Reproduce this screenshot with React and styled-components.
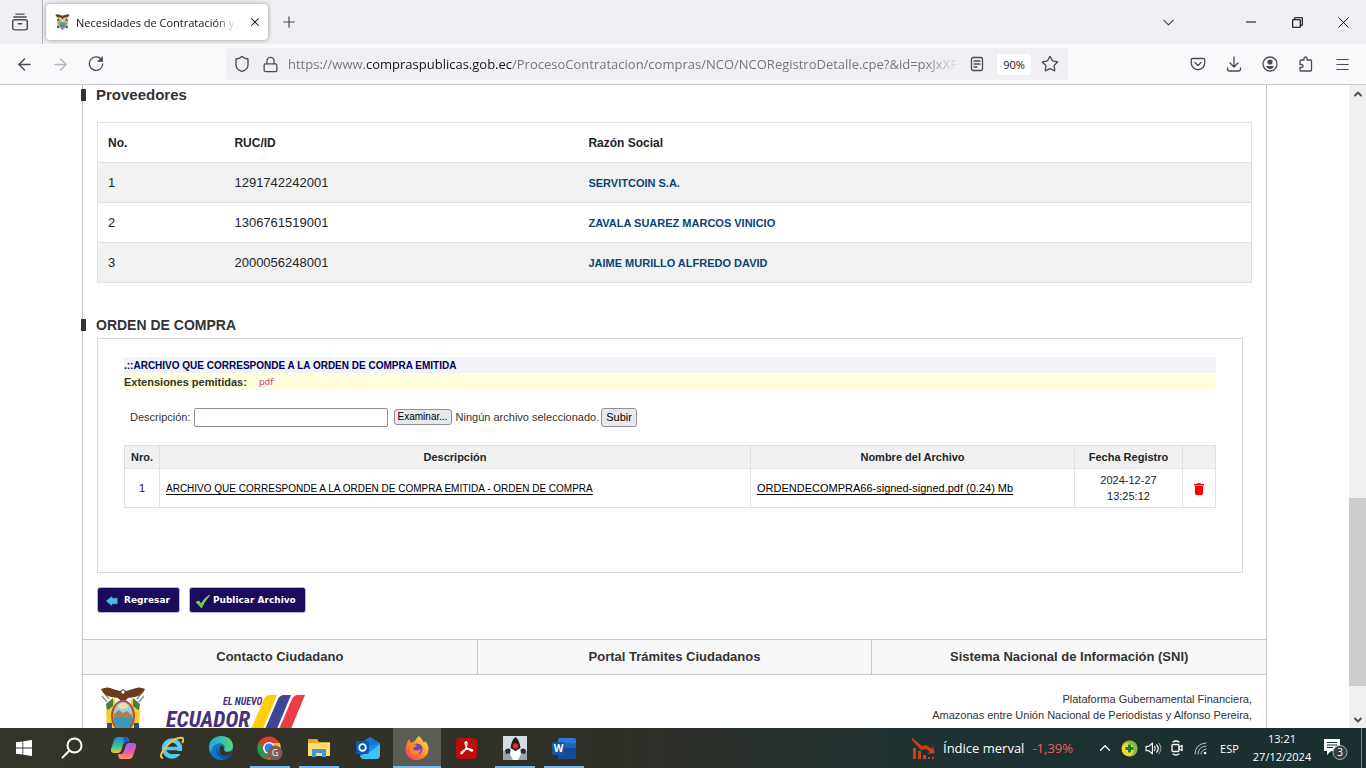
import React, { useRef, useState } from "react";
import styled, { createGlobalStyle, css } from "styled-components";
import {
  ArrowLeft,
  ArrowRight,
  ChevronDown,
  ChevronUp,
  Lock,
  Menu,
  Plus,
  Shield,
  Star,
  X,
} from "lucide-react";

const GlobalStyle = createGlobalStyle`
  * {
    box-sizing: border-box;
  }
  body {
    margin: 0;
    font-family: "Liberation Sans", Arial, sans-serif;
    color: #212529;
    background: #fff;
  }
  button, input {
    font-family: inherit;
  }
`;

const Screen = styled.div`
  height: 100vh;
  display: flex;
  flex-direction: column;
  overflow: hidden;
`;

/* ---------- browser ---------- */

const IconButton = styled.button`
  width: ${(p) => p.$width || 36}px;
  height: 32px;
  padding: 0;
  border: none;
  background: none;
  color: ${(p) => p.$color || "#4a4a52"};
  display: flex;
  flex-shrink: 0;
  align-items: center;
  justify-content: center;
`;

const TabStrip = styled.div`
  height: 44px;
  flex-shrink: 0;
  display: flex;
  align-items: center;
  background: #f0f0f4;
  font-family: "Open Sans", "Noto Sans", sans-serif;
`;

const ViewCell = styled.div`
  width: 43px;
  height: 100%;
  display: flex;
  align-items: center;
  border-right: 1px solid #b5b5bb;
`;

const Tab = styled.div`
  width: 222px;
  height: 36px;
  margin: 0 3px;
  padding-left: 9px;
  display: flex;
  align-items: center;
  gap: 6px;
  background: #fff;
  border-radius: 4px;
  box-shadow: 0 0 4px rgba(0, 0, 0, 0.4);
`;

const TabTitle = styled.span`
  flex: 1;
  overflow: hidden;
  white-space: nowrap;
  font-size: 11px;
  color: #15141a;
  mask-image: linear-gradient(to left, transparent, #000 20px);
`;

const WindowButtons = styled.div`
  margin-left: auto;
  display: flex;
`;

const NavBar = styled.div`
  height: 41px;
  flex-shrink: 0;
  padding: 0 6px;
  display: flex;
  align-items: center;
  background: #f9f9fb;
  border-bottom: 1px solid #c8c8ce;
  font-family: "Open Sans", "Noto Sans", sans-serif;
`;

const Spacer = styled.div`
  flex: 0 1 112px;
`;

const UrlBar = styled.div`
  flex: 1;
  min-width: 0;
  height: 32px;
  padding: 0 2px;
  display: flex;
  align-items: center;
  background: #f0f0f4;
  border-radius: 4px;
`;

const UrlText = styled.div`
  flex: 1;
  overflow: hidden;
  margin-left: 4px;
  white-space: nowrap;
  font-size: 13px;
  color: #77777e;
  mask-image: linear-gradient(to left, transparent, #000 36px);

  b {
    font-weight: 400;
    color: #15141a;
  }
`;

const ZoomButton = styled.button`
  width: 34px;
  height: 21px;
  margin: 0 3px 0 4px;
  padding: 0;
  border: none;
  border-radius: 3px;
  background: #fff;
  color: #15141a;
  font-size: 11px;
`;

/* ---------- page ---------- */

const Viewport = styled.div`
  flex: 1;
  min-height: 0;
  display: flex;
  overflow: hidden;
`;

const Page = styled.main`
  flex: 1;
  min-width: 0;
  padding: 0 82px;
  overflow: hidden;
`;

const Sheet = styled.div`
  border: solid #c4c4c8;
  border-width: 0 1px;
`;

const Content = styled.div`
  padding: 0 14px 26px;
`;

const Heading = styled.h2`
  margin: ${(p) => p.$top || 0}px 0 0 -16px;
  display: flex;
  align-items: center;
  gap: 10px;
  font-size: ${(p) => p.$size}px;
  line-height: 20px;
  color: #333;

  &::before {
    content: "";
    width: 5px;
    height: 12px;
    background: #333;
  }
`;

const ProviderTable = styled.table`
  width: 100%;
  margin-top: 17px;
  table-layout: fixed;
  border-collapse: collapse;
  border: 1px solid #dee2e6;
  text-align: left;
  font-size: 12px;

  tr {
    height: 40px;
    border-top: 1px solid #dee2e6;
  }
  tbody tr:nth-child(odd) {
    background: #f2f2f2;
  }
  th,
  td {
    padding: 0 10px;
  }
  td {
    font-size: 13px;
  }
  th:nth-child(1) {
    width: 11%;
  }
  th:nth-child(2) {
    width: 354px;
  }
`;

const ProviderLink = styled.a`
  font-size: 11px;
  font-weight: bold;
  color: #0d4278;
  text-decoration: none;
`;

const Panel = styled.section`
  margin: 3px 9px 0 0;
  padding: 18px 26px 64px;
  border: 1px solid #d8d8dc;
`;

const Strip = styled.div`
  height: 16px;
  margin-bottom: 1px;
  display: flex;
  align-items: center;
  gap: 12px;
  font-weight: bold;
  font-size: ${(p) => (p.$notice ? 11 : 10)}px;
  color: ${(p) => (p.$notice ? "#333" : "#00005c")};
  background: ${(p) => (p.$notice ? "#ffffdd" : "#f1f3f6")};
`;

const Extension = styled.code`
  font-family: "DejaVu Sans", sans-serif;
  font-size: 9px;
  font-weight: 400;
  color: #d63384;
`;

const UploadForm = styled.form`
  height: 20px;
  margin: 17px 0 18px;
  padding-left: 6px;
  display: flex;
  align-items: center;
  font-size: 11px;
  color: #333;
`;

const DescriptionInput = styled.input`
  width: 194px;
  height: 19px;
  margin: 0 6px 0 3px;
  padding: 0 4px;
  border: 1px solid #8f8f9d;
  border-radius: 2px;
  font-size: 11px;
`;

const FormButton = styled.button`
  height: ${(p) => (p.$small ? 16 : 19)}px;
  padding: 0 ${(p) => (p.$small ? 3 : 4)}px;
  border: 1px solid #8f8f9d;
  border-radius: 3px;
  background: #e9e9ed;
  color: #000;
  font-size: ${(p) => (p.$small ? 10 : 11)}px;
  line-height: 14px;
`;

const FileName = styled.span`
  margin: 0 2px 0 4px;
`;

const FileTable = styled.table`
  width: 100%;
  table-layout: fixed;
  border-collapse: collapse;
  font-size: 11px;
  line-height: 16px;
  text-align: center;

  th,
  td {
    padding: 0 6px;
    border: 1px solid #dee2e6;
  }
  th {
    height: 23px;
    padding: 0;
    background: #f1f1f1;
  }
  td {
    height: 39px;
  }
  td:nth-child(2),
  td:nth-child(3) {
    text-align: left;
  }
`;

const FileLink = styled.a`
  color: #000;
  font-size: ${(p) => (p.$small ? 10 : 11)}px;
  text-underline-offset: 2px;
`;

const TrashButton = styled.button`
  padding: 0;
  border: none;
  background: none;
  vertical-align: middle;

  svg {
    display: block;
  }
`;

const Actions = styled.div`
  margin-top: 14px;
  display: flex;
  gap: 9px;
`;

const ActionButton = styled.button`
  height: 26px;
  padding: 0 9px 0 ${(p) => p.$left}px;
  display: flex;
  align-items: center;
  gap: ${(p) => p.$gap}px;
  border: 1px solid #b9b3d8;
  border-radius: 3px;
  background: #1c0b5c;
  color: #fff;
  font: bold 9px "DejaVu Sans", Verdana, sans-serif;
`;

const FooterNav = styled.nav`
  display: flex;
  border: solid #c8c8cc;
  border-width: 1px 0;
  background: #f8f8f8;
`;

const FooterLink = styled.a`
  flex: 1;
  line-height: 34px;
  text-align: center;
  font-size: 13px;
  font-weight: bold;
  color: #333;
  text-decoration: none;

  & + & {
    border-left: 1px solid #c8c8cc;
  }
`;

const Footer = styled.footer`
  padding: 12px 14px;
  display: flex;
  align-items: flex-start;
  justify-content: space-between;
`;

const Brand = styled.div`
  padding-left: 3px;
  display: flex;
  gap: 18px;

  svg + svg {
    margin-top: 6px;
  }
`;

const Address = styled.p`
  margin: 4px 0 0;
  text-align: right;
  font-size: 11px;
  line-height: 16px;
  color: #333;
`;

/* ---------- scrollbar ---------- */

const ScrollTrack = styled.div`
  width: 17px;
  display: flex;
  flex-direction: column;
  align-items: center;
  background: #f0f0f0;
  color: #505050;
`;

const ScrollArrow = styled.div`
  height: 17px;
  display: flex;
  align-items: center;
`;

const ScrollGap = styled.div`
  flex: ${(p) => p.$grow};
`;

const ScrollThumb = styled.div`
  width: 17px;
  flex: 188;
  background: #cdcdcd;
`;

/* ---------- taskbar ---------- */

const Taskbar = styled.div`
  height: 40px;
  flex-shrink: 0;
  display: flex;
  background: linear-gradient(90deg, #35342a 0%, #302f27 45%, #1f3132 68%, #1b2e30 100%);
  color: #fff;
  font-family: "Open Sans", "Noto Sans", sans-serif;
`;

const openMark = css`
  &::after {
    content: "";
    position: absolute;
    left: ${(p) => (p.$active ? 0 : 4)}px;
    right: ${(p) => (p.$active ? 0 : 4)}px;
    bottom: 0;
    height: 2px;
    background: #76b9ed;
  }
`;

const TaskButton = styled.button`
  position: relative;
  width: 48px;
  height: 40px;
  margin-right: 1px;
  padding: 0;
  border: none;
  background: ${(p) => (p.$active ? "#5b5c53" : "none")};
  display: flex;
  align-items: center;
  justify-content: center;
  ${(p) => p.$open && openMark}

  &:nth-child(1) {
    margin-right: 0;
  }
  &:nth-child(2) {
    margin-right: 3px;
  }
`;

const Tray = styled.div`
  margin-left: auto;
  display: flex;
  align-items: center;
`;

const News = styled.div`
  margin-right: 20px;
  display: flex;
  align-items: center;
  gap: 8px;
  font-size: 13px;
`;

const Loss = styled.span`
  color: #ec6060;
`;

const Clock = styled.time`
  width: 72px;
  text-align: center;
  font-size: 11px;
  line-height: 18px;
`;

const Language = styled.span`
  width: 33px;
  text-align: center;
  font-size: 11px;
`;

const DesktopEdge = styled.div`
  width: 5px;
  height: 40px;
  margin-left: 7px;
  border-left: 1px solid #7c8788;
`;

/* ---------- drawings ---------- */

const Line = ({ size = 16, children, ...rest }) => (
  <svg
    width={size}
    height={size}
    viewBox="0 0 16 16"
    fill="none"
    stroke="currentColor"
    strokeWidth="1.3"
    strokeLinecap="round"
    strokeLinejoin="round"
    {...rest}
  >
    {children}
  </svg>
);

const Crest = ({ width, height }) => (
  <svg width={width} height={height} viewBox="0 0 46 48">
    <path d="M8 15 15 11v31H7zM38 15l-7-4v31h8z" fill="#f6cf2c" />
    <path d="M7 15 2 9M9 12 5 7M39 15l5-6M37 12l4-5" stroke="#8b8e79" strokeWidth="1.3" />
    <path d="M6 17l7-6v8l-6 5zM40 17l-7-6v8l6 5z" fill="#457d42" />
    <path d="M6 24l5-3v20H7zM40 24l-5-3v20h4z" fill="#f6cf2c" />
    <path d="M7 36h5v7H7zM34 36h5v7h-5z" fill="#294b8f" />
    <path
      d="M1 2q7-3 12 0l7 2 3-2 3 2 7-2q6-3 12 0-2 6-10 8l-7 1-5 5-5-5-7-1Q3 8 1 2"
      fill="#6c3d1d"
    />
    <circle cx="23" cy="5" r="1.7" fill="#eee6d5" />
    <ellipse cx="23" cy="29" rx="12" ry="16" fill="#b54c38" />
    <ellipse cx="23" cy="29" rx="9.8" ry="14" fill="#9fcfe4" />
    <ellipse cx="23" cy="19" rx="5" ry="3" fill="#efe19e" />
    <path d="m14 27 5-4 4 3 4-2 5 4v4H14z" fill="#a28358" />
    <path d="M13.5 31h19q-1 9-6 11h-7q-5-3-6-11" fill="#3f95b8" />
    <path d="m17 45 6 3 6-3" fill="#c52e37" />
  </svg>
);

const EcuadorLogo = () => (
  <svg width="146" height="44" viewBox="0 0 146 44">
    <g
      fill="#46307f"
      fontFamily="'Roboto Condensed', 'Open Sans Condensed', 'Liberation Sans', sans-serif"
      fontWeight="bold"
      fontStyle="italic"
    >
      <text x="59" y="12" fontSize="10">EL NUEVO</text>
      <text x="2" y="34" fontSize="22">ECUADOR</text>
    </g>
    <path d="M113 2h-7q-4 0-6 4L84 43h12z" fill="#ffce0a" />
    <path d="M127 2h-7q-4 0-6 4L98 43h12z" fill="#3d4696" />
    <path d="M141 2h-7q-4 0-6 4l-16 37h12z" fill="#ea3d46" />
  </svg>
);

const Trash = () => (
  <svg width="10" height="12" viewBox="0 0 10 12" fill="#f00">
    <path d="M0 1h3l1-1h2l1 1h3v1.400H0zM1 3h8v7.500Q9 12 7.500 12h-5Q1 12 1 10.500z" />
  </svg>
);

const BackArrow = () => (
  <svg width="12" height="12" viewBox="0 0 12 12">
    <path d="m0 7 6-5v2h5.500v6H6v2z" fill="#53b7de" stroke="#1d6d9b" strokeWidth=".6" />
  </svg>
);

const Check = () => (
  <svg width="15" height="18" viewBox="0 0 15 18">
    <path d="m0 11 3-1 2 3q4-7 9-9Q8 11 5.500 17z" fill="#64d52b" stroke="#b9f28b" strokeWidth=".5" />
  </svg>
);

const Windows = () => (
  <svg width="16" height="16" viewBox="0 0 16 16" fill="#fff">
    <path d="m0 2.300 6.500-.9v6.200H0zM7.300 1.200 16 0v7.600H7.300zM0 8.400h6.500v6.200L0 13.700zM7.300 8.400H16V16l-8.700-1.200z" />
  </svg>
);

const Search = () => (
  <svg width="22" height="22" viewBox="0 0 22 22" fill="none" stroke="#fff" strokeWidth="2">
    <circle cx="13.500" cy="8.500" r="7" />
    <path d="M8.500 13.500 1 21" />
  </svg>
);

const Copilot = () => (
  <svg width="25" height="22" viewBox="0 0 25 22">
    <defs>
      <linearGradient id="cpA" x2="0" y2="1">
        <stop stopColor="#168be0" />
        <stop offset=".6" stopColor="#3bc28c" />
        <stop offset="1" stopColor="#f3c83a" />
      </linearGradient>
      <linearGradient id="cpB" x2="0" y2="1">
        <stop stopColor="#a45cf0" />
        <stop offset=".6" stopColor="#ec5d9b" />
        <stop offset="1" stopColor="#ff9b57" />
      </linearGradient>
    </defs>
    <path d="M7 0h8q3 0 3 5h-3q-2 0-3 3l-2 6q-1 2-3 2H3q-4 0-3-4L3 3q1-3 4-3" fill="url(#cpA)" />
    <path d="M12 0h3q2 0 3 5h-3q-1 0-2 2z" fill="#2456cf" />
    <path d="M18 6h4q4 0 3 4l-3 9q-1 3-4 3h-8q-3 0-3-5h3q2 0 3-3l2-6q1-2 3-2" fill="url(#cpB)" />
  </svg>
);

const Explorer = () => (
  <svg width="24" height="24" viewBox="0 0 24 24" fill="none">
    <circle cx="12" cy="12.500" r="8" stroke="#59c8f3" strokeWidth="4.500" />
    <path d="M6 12.500h15" stroke="#59c8f3" strokeWidth="3.500" />
    <path d="M14 15h9v3h-9z" fill="#323128" />
    <path d="M3 22Q-2 21 5 12T19 2t3 5" stroke="#f6c637" strokeWidth="2" />
  </svg>
);

const Edge = () => (
  <svg width="24" height="24" viewBox="0 0 24 24">
    <defs>
      <linearGradient id="edA">
        <stop stopColor="#1ea5e8" />
        <stop offset="1" stopColor="#55d66b" />
      </linearGradient>
    </defs>
    <circle cx="12" cy="12" r="12" fill="#1373c5" />
    <path d="M0 11C1-4 24-3 24 10c0 6-8 7-9 4 3-5-3-8-7-6Q3 9 2 17 0 14 0 11" fill="url(#edA)" />
    <path d="M15 14c1 3 7 3 9 0-1 3-3 5-6 6-6 1-9-4-7-9 1-2 4-2 4 3" fill="#30312c" />
    <path d="M8 10q-3 9 6 13 6 0 9-6-8 5-13 0-3-3-2-7" fill="#12509e" />
  </svg>
);

const Chrome = () => (
  <svg width="26" height="24" viewBox="0 0 26 24">
    <circle cx="12" cy="12" r="11.500" fill="#e33b2e" />
    <path d="M2 6Q-3 17 8 23l5-8-6-2z" fill="#249a50" />
    <path d="M12 7h11q3 11-8 16l-4 .5 6-9z" fill="#fbc116" />
    <circle cx="12" cy="12" r="6" fill="#fff" />
    <circle cx="12" cy="12" r="4.500" fill="#3b7de8" />
    <circle cx="18" cy="17" r="7.500" fill="#795f58" />
    <text x="18" y="20" fill="#fff" fontSize="9" textAnchor="middle">G</text>
  </svg>
);

const Folder = () => (
  <svg width="22" height="20" viewBox="0 0 22 20">
    <path d="M0 1h9l2 3h11v14H0z" fill="#e6a823" />
    <path d="M0 5h22v13H0z" fill="#ffdc74" />
    <path d="M4 11h14v8h-4v-4H8v4H4z" fill="#4199d3" />
  </svg>
);

const Outlook = () => (
  <svg width="24" height="22" viewBox="0 0 24 22">
    <path d="M4 6 14 0l10 6v12q0 4-4 4H8q-4 0-4-4z" fill="#1479cf" />
    <path d="M24 7v11q0 4-4 4H8q-3 0-4-3l12-6z" fill="#41c3f2" />
    <path d="m12 9 12-2-10 8z" fill="#1c8fe0" />
    <rect y="4" width="13" height="13" rx="2" fill="#0a5aba" />
    <circle cx="6.500" cy="10.500" r="3.300" fill="none" stroke="#fff" strokeWidth="1.800" />
  </svg>
);

const Firefox = () => (
  <svg width="24" height="24" viewBox="0 0 24 24">
    <defs>
      <linearGradient id="ffA" x1="1" y1="0" x2="0" y2="1">
        <stop stopColor="#fff04a" />
        <stop offset=".45" stopColor="#ff9a23" />
        <stop offset="1" stopColor="#f62b68" />
      </linearGradient>
    </defs>
    <path
      d="M14 0c2 2 4 4 5 7l1-2c7 7 3 18-8 19C3 24-2 16 2 7L4 3l2 4 4-2c1-2 2-4 4-5"
      fill="url(#ffA)"
    />
    <circle cx="12" cy="13" r="5.500" fill="#7a3fc8" />
    <path d="M5 9c2-2 6-1 7 1-2 1-4 1-4 3q3 3 8 0-2 8-8 5-5-3-3-9" fill="#ff8a25" />
  </svg>
);

const Acrobat = () => (
  <svg width="21" height="21" viewBox="0 0 21 21">
    <rect width="21" height="21" rx="4" fill="#b90e0c" />
    <path
      d="M10 4c2 0 1 4-1 8-2 3-4 5-4 3s5-4 8-4 5 2 3 2c-3 0-7-5-7-8q0-1 1-1"
      fill="none"
      stroke="#fff"
      strokeWidth="1.300"
    />
  </svg>
);

const Duke = () => (
  <svg width="24" height="24" viewBox="0 0 24 24">
    <rect width="24" height="24" fill="#d5dce3" />
    <path d="M0 15h24v9H0z" fill="#9aa4ac" />
    <path d="M2 14q3-3 7 0v3l-6 1zM23 14q-3-3-6 0v3l5 1z" fill="#2a2d31" />
    <path d="M8 10h9l1 8-3 6h-5l-3-6z" fill="#fff" />
    <path d="M12.500 1q4 3 5 11l-5 3-5-3q1-8 5-11" fill="#1b1d20" />
    <circle cx="12.500" cy="10" r="2.800" fill="#e5292c" />
  </svg>
);

const Word = () => (
  <svg width="24" height="21" viewBox="0 0 24 21">
    <rect x="6" width="18" height="21" rx="2" fill="#2b7cd3" />
    <path d="M6 5h18v5H6z" fill="#2164bb" />
    <path d="M6 10h18v9q0 2-2 2H8q-2 0-2-2z" fill="#174894" />
    <rect y="4" width="13" height="13" rx="2" fill="#1455a8" />
    <text x="6.500" y="14" fill="#fff" fontSize="10" fontWeight="bold" textAnchor="middle">W</text>
  </svg>
);

const FallingChart = () => (
  <svg width="23" height="23" viewBox="0 0 23 23" fill="#c8401d">
    <path d="m0 1 10 8 4-1 6 4 1-3 2 7-8 1 3-2-4-3-5 1L0 3z" />
    <path d="M1 11h3v11H1zM6 14h3v8H6zM11 18h3v4h-3zM16 20h2v2h-2zM20 20h2v2h-2z" />
  </svg>
);

const Speaker = () => (
  <Line size={17}>
    <path d="M1 6h2.500L7 3v10L3.500 10H1zM9 6q1.500 2 0 4M11 4.500q3 3.500 0 7" strokeWidth="1.100" />
    <path d="M13 3q4 5 0 10" strokeWidth="1" opacity=".5" />
  </Line>
);

const MeetNow = () => (
  <Line>
    <rect x="3" y="4.500" width="7" height="7" rx="1" />
    <path d="m10 7 3-1.500v5L10 9M4 2q3-2 6 0M4 14q3 2 6 0" />
  </Line>
);

const Wifi = () => (
  <Line>
    <g stroke="#bcc4c4" strokeWidth="1">
      <path d="M2 14Q2 4 13 3M5 14q0-7 8-8M8 14q0-4 5-5" />
    </g>
    <circle cx="12" cy="13" r="1.300" fill="#fff" stroke="none" />
  </Line>
);

const Shielded = () => (
  <svg width="17" height="17" viewBox="0 0 17 17">
    <circle cx="8.500" cy="8.500" r="8" fill="#f1d82b" />
    <path d="M9 .5q-7 0-8.500 8Q1 4 6 3q6 0 7 6 0 4-4 7.500 7-1 7.500-8Q16 1 9 .5" fill="#3aa647" opacity=".6" />
    <path d="M8.500 4.500v8M4.500 8.500h8" stroke="#187d32" strokeWidth="3" />
  </svg>
);

const Notifications = () => (
  <svg width="26" height="24" viewBox="0 0 26 24">
    <path d="M1 3h16v12h-9l-4 4v-4H1z" fill="#fff" />
    <path d="M4 6.500h10M4 9h10M4 11.500h6" stroke="#1d2f31" />
    <circle cx="17" cy="16.500" r="7" fill="#344142" stroke="#a5adae" />
    <text x="17" y="20" fill="#fff" fontSize="10" textAnchor="middle">3</text>
  </svg>
);

/* ---------- data ---------- */

const providers = [
  { ruc: "1291742242001", name: "SERVITCOIN S.A." },
  { ruc: "1306761519001", name: "ZAVALA SUAREZ MARCOS VINICIO" },
  { ruc: "2000056248001", name: "JAIME MURILLO ALFREDO DAVID" },
];

const apps = [
  { label: "Inicio", Icon: Windows },
  { label: "Buscar", Icon: Search },
  { label: "Copilot", Icon: Copilot },
  { label: "Internet Explorer", Icon: Explorer },
  { label: "Edge", Icon: Edge },
  { label: "Chrome", Icon: Chrome, open: true },
  { label: "Explorador de archivos", Icon: Folder, open: true },
  { label: "Outlook", Icon: Outlook },
  { label: "Firefox", Icon: Firefox, open: true, active: true },
  { label: "Acrobat", Icon: Acrobat },
  { label: "Java", Icon: Duke, open: true },
  { label: "Word", Icon: Word, open: true },
];

const BrowserTabs = () => (
  <TabStrip>
    <ViewCell>
      <IconButton aria-label="Firefox View" $width={40}>
        <Line size={18}>
          <rect x="1.500" y="6" width="13" height="9" rx="1.800" />
          <path d="M2.500 3.500h11M4.500 1h7M6.500 9.500h3" />
        </Line>
      </IconButton>
    </ViewCell>
    <Tab>
      <Crest width={15} height={16} />
      <TabTitle>Necesidades de Contratación y</TabTitle>
      <IconButton aria-label="Cerrar pestaña" $width={26} $color="#15141a">
        <X size={14} strokeWidth={1.8} />
      </IconButton>
    </Tab>
    <IconButton aria-label="Nueva pestaña">
      <Plus size={18} strokeWidth={1.6} />
    </IconButton>
    <WindowButtons>
      <IconButton aria-label="Listar pestañas" $width={120}>
        <ChevronDown size={19} strokeWidth={1.5} />
      </IconButton>
      <IconButton aria-label="Minimizar" $width={46} $color="#000">
        <Line size={10} strokeLinecap="butt">
          <path d="M0 8h16" strokeWidth="1.600" />
        </Line>
      </IconButton>
      <IconButton aria-label="Restaurar" $width={46} $color="#000">
        <Line size={11} overflow="visible">
          <path d="M1 4h11v11H1zM4 4V1h11v11h-3" strokeWidth="1.600" />
        </Line>
      </IconButton>
      <IconButton aria-label="Cerrar" $width={46} $color="#000">
        <Line size={11}>
          <path d="m1 1 14 14M15 1 1 15" />
        </Line>
      </IconButton>
    </WindowButtons>
  </TabStrip>
);

const BrowserNav = () => (
  <NavBar>
    <IconButton aria-label="Atrás">
      <ArrowLeft size={19} strokeWidth={1.8} />
    </IconButton>
    <IconButton aria-label="Adelante" $color="#b8b8be">
      <ArrowRight size={19} strokeWidth={1.8} />
    </IconButton>
    <IconButton aria-label="Recargar">
      <Line>
        <path d="M13.500 3.800A6.700 6.700 0 1 0 14.700 8" />
        <path d="M14.500 1v4.500H10z" fill="currentColor" strokeWidth=".8" />
      </Line>
    </IconButton>
    <Spacer />
    <UrlBar>
      <IconButton aria-label="Protección" $width={28}>
        <Shield size={18} strokeWidth={1.8} />
      </IconButton>
      <IconButton aria-label="Conexión segura" $width={28}>
        <Lock size={17} strokeWidth={1.8} />
      </IconButton>
      <UrlText>
        https://www.<b>compraspublicas.gob.ec</b>
        /ProcesoContratacion/compras/NCO/NCORegistroDetalle.cpe?&amp;id=pxJxXF
      </UrlText>
      <IconButton aria-label="Vista de lectura" $width={33}>
        <Line>
          <rect x="2.500" y="1.500" width="11" height="13" rx="1.500" />
          <path d="M5 5h6M5 8h6M5 11h3" />
        </Line>
      </IconButton>
      <ZoomButton>90%</ZoomButton>
      <IconButton aria-label="Marcador" $width={32}>
        <Star size={18} strokeWidth={1.8} />
      </IconButton>
    </UrlBar>
    <Spacer />
    <IconButton aria-label="Pocket">
      <Line>
        <path d="M2.500 2.500h11q1.200 0 1.200 1.200V7a6.700 6.700 0 0 1-13.400 0V3.700q0-1.200 1.200-1.200" />
        <path d="m5 6.500 3 3 3-3" />
      </Line>
    </IconButton>
    <IconButton aria-label="Descargas">
      <Line>
        <path d="M8 1v9.500M4 7l4 4 4-4M1.500 12v1q0 2 2 2h9q2 0 2-2v-1" />
      </Line>
    </IconButton>
    <IconButton aria-label="Cuenta">
      <Line>
        <circle cx="8" cy="8" r="7" />
        <circle cx="8" cy="6" r="2.600" fill="currentColor" stroke="none" />
        <path d="M4 10h8q-1 3-4 3t-4-3" fill="currentColor" stroke="none" />
      </Line>
    </IconButton>
    <IconButton aria-label="Extensiones">
      <Line>
        <path d="M2 8.500V5q0-1 1-1h3V2.500q0-1.500 1.500-1.500T9 2.500V4h3.500q1 0 1 1v9q0 1-1 1H3q-1 0-1-1v-2.500h1.500Q5 11.500 5 10T3.500 8.500z" />
      </Line>
    </IconButton>
    <IconButton aria-label="Menú">
      <Menu size={17} strokeWidth={1.6} />
    </IconButton>
  </NavBar>
);

const Upload = () => {
  const fileRef = useRef(null);
  const [fileName, setFileName] = useState("");

  return (
    <UploadForm onSubmit={(e) => e.preventDefault()}>
      <label htmlFor="descripcion">Descripción:</label>
      <DescriptionInput id="descripcion" type="text" />
      <input
        ref={fileRef}
        type="file"
        accept=".pdf"
        aria-label="Archivo"
        hidden
        onChange={(e) => setFileName(e.target.files[0]?.name || "")}
      />
      <FormButton type="button" $small onClick={() => fileRef.current.click()}>
        Examinar...
      </FormButton>
      <FileName>{fileName || "Ningún archivo seleccionado."}</FileName>
      <FormButton type="submit">Subir</FormButton>
    </UploadForm>
  );
};

const Files = () => (
  <FileTable>
    <colgroup>
      <col width="35" />
      <col />
      <col width="324" />
      <col width="108" />
      <col width="33" />
    </colgroup>
    <thead>
      <tr>
        <th>Nro.</th>
        <th>Descripción</th>
        <th>Nombre del Archivo</th>
        <th>Fecha Registro</th>
        <th aria-label="Eliminar" />
      </tr>
    </thead>
    <tbody>
      <tr>
        <td>1</td>
        <td>
          <FileLink href="#archivo" $small>
            ARCHIVO QUE CORRESPONDE A LA ORDEN DE COMPRA EMITIDA - ORDEN DE COMPRA
          </FileLink>
        </td>
        <td>
          <FileLink href="#pdf">ORDENDECOMPRA66-signed-signed.pdf (0.24) Mb</FileLink>
        </td>
        <td>
          2024-12-27
          <br />
          13:25:12
        </td>
        <td>
          <TrashButton aria-label="Eliminar archivo">
            <Trash />
          </TrashButton>
        </td>
      </tr>
    </tbody>
  </FileTable>
);

const WindowsTaskbar = () => (
  <Taskbar>
    {apps.map(({ label, Icon, open, active }) => (
      <TaskButton key={label} aria-label={label} $open={open} $active={active}>
        <Icon />
      </TaskButton>
    ))}
    <Tray>
      <News>
        <FallingChart />
        <span>Índice merval</span>
        <Loss>-1,39%</Loss>
      </News>
      <IconButton aria-label="Mostrar iconos ocultos" $width={24} $color="#fff">
        <ChevronUp size={18} strokeWidth={1.6} />
      </IconButton>
      <IconButton aria-label="Antivirus" $width={24}>
        <Shielded />
      </IconButton>
      <IconButton aria-label="Volumen" $width={24} $color="#fff">
        <Speaker />
      </IconButton>
      <IconButton aria-label="Reunirse ahora" $width={24} $color="#fff">
        <MeetNow />
      </IconButton>
      <IconButton aria-label="Red" $width={24} $color="#fff">
        <Wifi />
      </IconButton>
      <Language>ESP</Language>
      <Clock>
        13:21
        <br />
        27/12/2024
      </Clock>
      <IconButton aria-label="Notificaciones" $width={36}>
        <Notifications />
      </IconButton>
      <DesktopEdge />
    </Tray>
  </Taskbar>
);

const App = () => (
  <Screen>
    <GlobalStyle />
    <BrowserTabs />
    <BrowserNav />
    <Viewport>
      <Page>
        <Sheet>
          <Content>
            <Heading $size={15}>Proveedores</Heading>
            <ProviderTable>
              <thead>
                <tr>
                  <th>No.</th>
                  <th>RUC/ID</th>
                  <th>Razón Social</th>
                </tr>
              </thead>
              <tbody>
                {providers.map(({ ruc, name }, i) => (
                  <tr key={ruc}>
                    <td>{i + 1}</td>
                    <td>{ruc}</td>
                    <td>
                      <ProviderLink href={`#${ruc}`}>{name}</ProviderLink>
                    </td>
                  </tr>
                ))}
              </tbody>
            </ProviderTable>

            <Heading $size={14} $top={32}>
              ORDEN DE COMPRA
            </Heading>
            <Panel>
              <Strip>.::ARCHIVO QUE CORRESPONDE A LA ORDEN DE COMPRA EMITIDA</Strip>
              <Strip $notice>
                Extensiones pemitidas: <Extension>pdf</Extension>
              </Strip>
              <Upload />
              <Files />
            </Panel>
            <Actions>
              <ActionButton $left={8} $gap={6}>
                <BackArrow />
                Regresar
              </ActionButton>
              <ActionButton $left={6} $gap={2}>
                <Check />
                Publicar Archivo
              </ActionButton>
            </Actions>
          </Content>
          <FooterNav>
            <FooterLink href="#contacto">Contacto Ciudadano</FooterLink>
            <FooterLink href="#tramites">Portal Trámites Ciudadanos</FooterLink>
            <FooterLink href="#sni">Sistema Nacional de Información (SNI)</FooterLink>
          </FooterNav>
          <Footer>
            <Brand>
              <Crest width={46} height={48} />
              <EcuadorLogo />
            </Brand>
            <Address>
              Plataforma Gubernamental Financiera,
              <br />
              Amazonas entre Unión Nacional de Periodistas y Alfonso Pereira,
            </Address>
          </Footer>
        </Sheet>
      </Page>
      <ScrollTrack>
        <ScrollArrow>
          <ChevronUp size={12} strokeWidth={4} />
        </ScrollArrow>
        <ScrollGap $grow={396} />
        <ScrollThumb />
        <ScrollGap $grow={25} />
        <ScrollArrow>
          <ChevronDown size={12} strokeWidth={4} />
        </ScrollArrow>
      </ScrollTrack>
    </Viewport>
    <WindowsTaskbar />
  </Screen>
);

export default App;
